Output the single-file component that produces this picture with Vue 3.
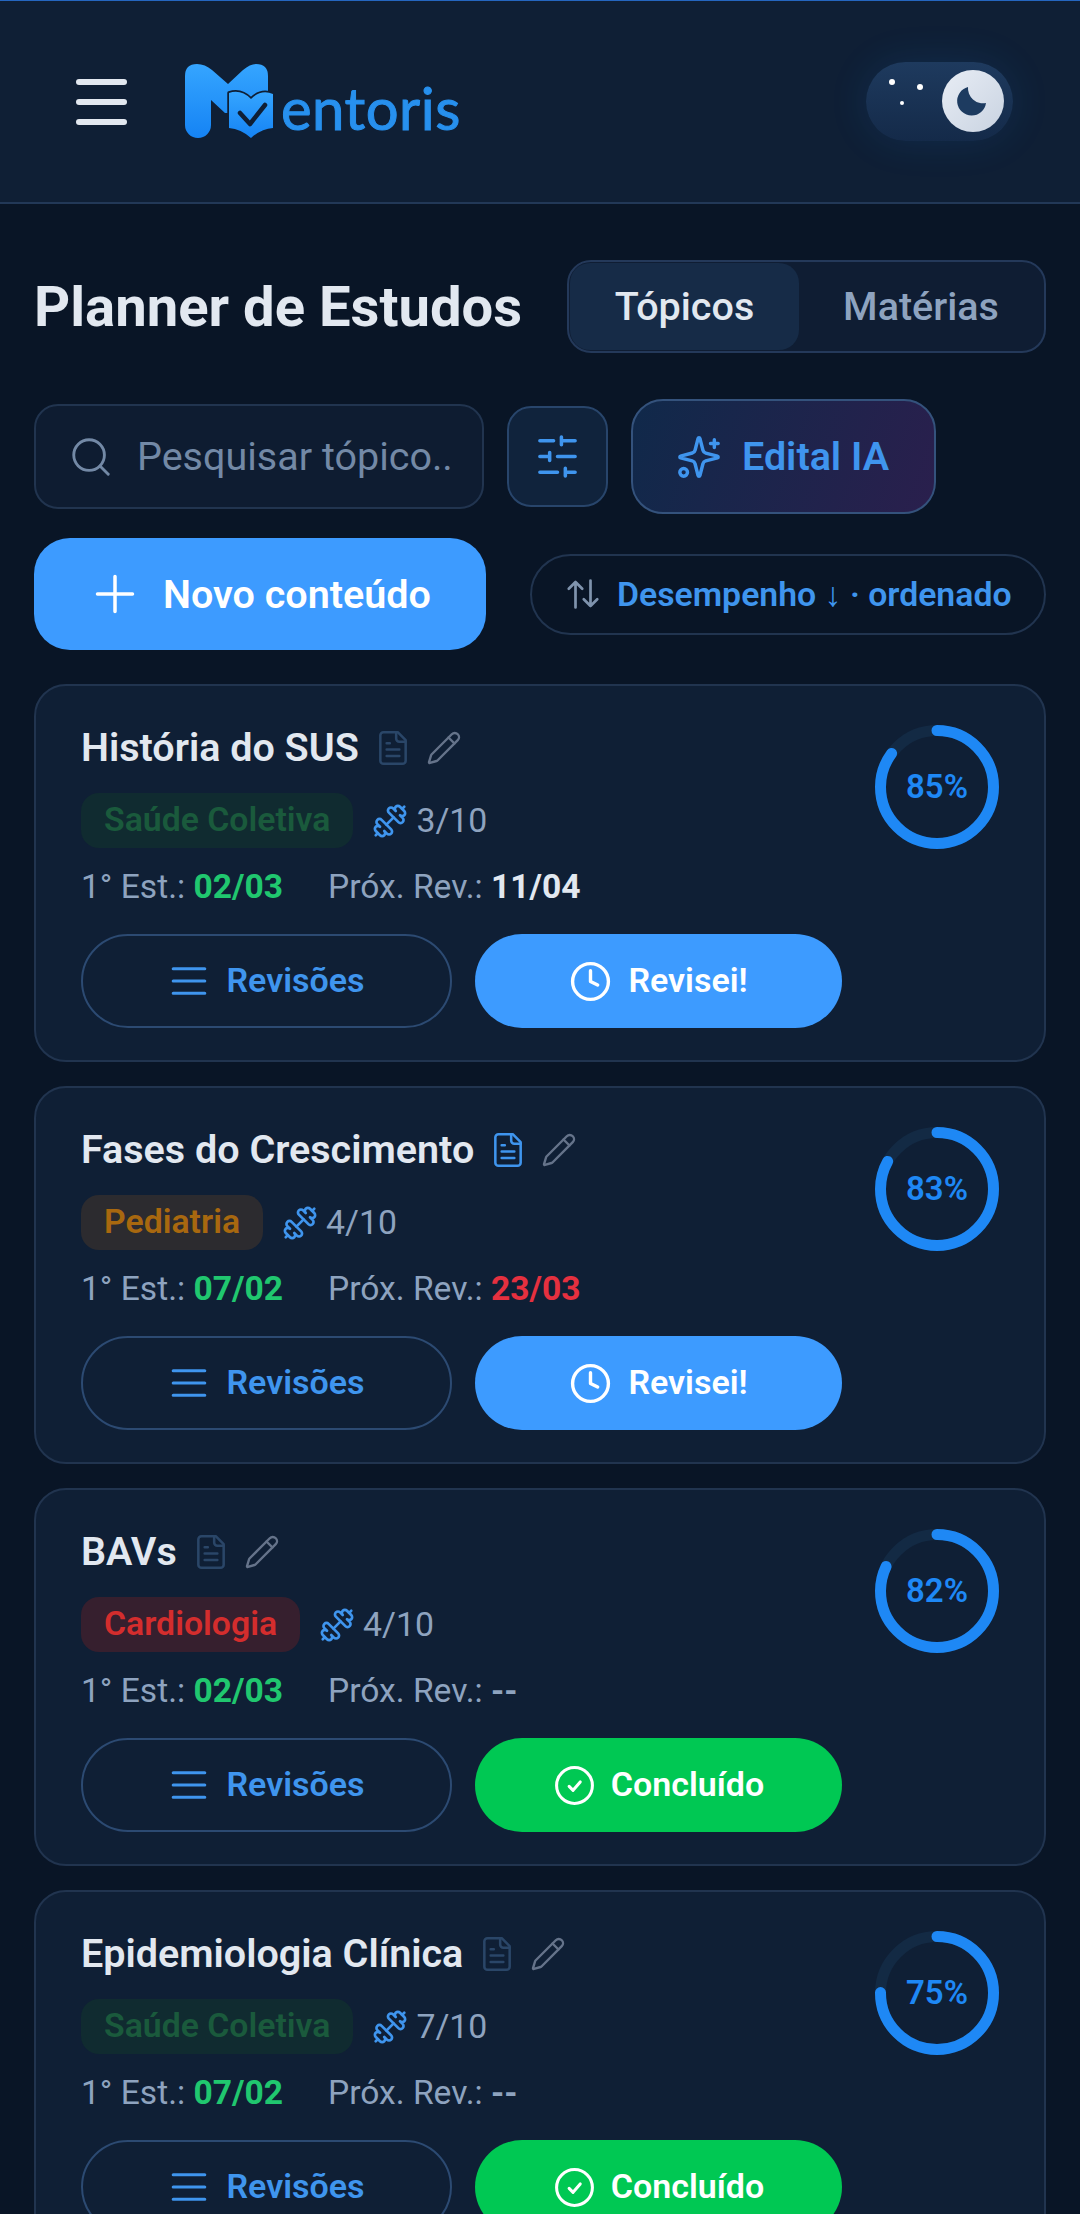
<script setup>
const topics = [
  { id: 1, title: 'História do SUS', note: false, tag: 'Saúde Coletiva', tagClass: 'green', reps: '3/10', first: '02/03', next: '11/04', nextClass: 'white', percent: 85, done: false },
  { id: 2, title: 'Fases do Crescimento', note: true, tag: 'Pediatria', tagClass: 'orange', reps: '4/10', first: '07/02', next: '23/03', nextClass: 'red', percent: 83, done: false },
  { id: 3, title: 'BAVs', note: false, tag: 'Cardiologia', tagClass: 'crimson', reps: '4/10', first: '02/03', next: '--', nextClass: 'muted', percent: 82, done: true },
  { id: 4, title: 'Epidemiologia Clínica', note: false, tag: 'Saúde Coletiva', tagClass: 'green', reps: '7/10', first: '07/02', next: '--', nextClass: 'muted', percent: 75, done: true },
]

const radius = 56.5
const circumference = 2 * Math.PI * radius

function dash(percent) {
  return `${(circumference * percent) / 100} ${circumference}`
}
</script>

<template>
  <div class="page">
    <header class="header">
      <button class="menu" type="button">
        <span></span>
        <span></span>
        <span></span>
      </button>
      <div class="logo">
        <svg class="logo-mark" width="90" height="76" viewBox="0 0 90 76">
          <defs>
            <linearGradient id="logoBlue" x1="0" y1="0" x2="0" y2="1">
              <stop offset="0" stop-color="#35a5ff" />
              <stop offset="1" stop-color="#1583f4" />
            </linearGradient>
          </defs>
          <path d="M0 13Q0 1 12 1Q20 1 27 7L43 21L58 7Q65 1 71 1Q83 1 83 13V50H40L26 37V62A13 13 0 0 1 0 62Z" fill="url(#logoBlue)" />
          <path d="M44 30Q56 26 66 36Q76 26 88 31V65Q76 66 66 75Q56 66 44 65Z" fill="url(#logoBlue)" stroke="#0f1f35" stroke-width="3.5" stroke-linejoin="round" paint-order="stroke" />
          <path d="M55 50L65 61L80 42" fill="none" stroke="#0f1f35" stroke-width="4.5" stroke-linecap="round" stroke-linejoin="round" />
        </svg>
        <span class="logo-text">entoris</span>
      </div>
      <div class="theme-toggle">
        <i class="star s1"></i>
        <i class="star s2"></i>
        <i class="star s3"></i>
        <span class="knob">
          <svg width="62" height="62" viewBox="0 0 62 62">
            <path d="M26 17A14.5 14.5 0 1 0 44 33A15 15 0 0 1 26 17Z" fill="#1d3b60" />
          </svg>
        </span>
      </div>
    </header>

    <main class="content">
      <div class="title-row">
        <h1>Planner de Estudos</h1>
        <div class="segment">
          <span class="seg-item active">Tópicos</span>
          <span class="seg-item">Matérias</span>
        </div>
      </div>

      <div class="search-row">
        <div class="search">
          <svg width="46" height="46" viewBox="0 0 24 24" fill="none" stroke="#7389a6" stroke-width="1.5" stroke-linecap="round">
            <circle cx="11" cy="11" r="8" />
            <path d="m21 21-4.3-4.3" />
          </svg>
          <span>Pesquisar tópico..</span>
        </div>
        <button class="filter" type="button">
          <svg width="47" height="47" viewBox="0 0 24 24" fill="none" stroke="#3f95ee" stroke-width="1.8" stroke-linecap="round">
            <path d="M21 4h-7M10 4H3M21 12h-9M8 12H3M21 20h-5M12 20H3M14 2v4M8 10v4M16 18v4" />
          </svg>
        </button>
        <button class="edital" type="button">
          <svg width="46" height="46" viewBox="0 0 24 24" fill="none" stroke="#3f95ee" stroke-width="1.8" stroke-linecap="round" stroke-linejoin="round">
            <path d="M9.937 15.5A2 2 0 0 0 8.5 14.063l-6.135-1.582a.5.5 0 0 1 0-.962L8.5 9.936A2 2 0 0 0 9.937 8.5l1.582-6.135a.5.5 0 0 1 .963 0L14.063 8.5A2 2 0 0 0 15.5 9.937l6.135 1.581a.5.5 0 0 1 0 .964L15.5 14.063a2 2 0 0 0-1.437 1.437l-1.582 6.135a.5.5 0 0 1-.963 0z" />
            <path d="M20 3v4M22 5h-4" />
            <circle cx="4" cy="20" r="2" />
          </svg>
          <span>Edital IA</span>
        </button>
      </div>

      <div class="action-row">
        <button class="new-btn" type="button">
          <svg width="42" height="42" viewBox="0 0 24 24" fill="none" stroke="#fff" stroke-width="2" stroke-linecap="round">
            <path d="M2 12h20M12 2v20" />
          </svg>
          <span>Novo conteúdo</span>
        </button>
        <button class="sort" type="button">
          <svg width="36" height="36" viewBox="0 0 24 24" fill="none" stroke="#7f93ad" stroke-width="1.8" stroke-linecap="round" stroke-linejoin="round">
            <path d="M7 21V4M2.500 8.500 7 4l4.500 4.500M17 3v17M12.500 15.500 17 20l4.500-4.500" />
          </svg>
          <span>Desempenho ↓ · ordenado</span>
        </button>
      </div>

      <section class="cards">
        <article v-for="item in topics" :key="item.id" class="card">
          <div class="card-main">
            <div class="card-title">
              <h2>{{ item.title }}</h2>
              <svg :class="['doc', { on: item.note }]" width="38" height="38" viewBox="0 0 24 24" fill="none" stroke="currentColor" stroke-width="1.6" stroke-linecap="round" stroke-linejoin="round">
                <path d="M15 2H6a2 2 0 0 0-2 2v16a2 2 0 0 0 2 2h12a2 2 0 0 0 2-2V7Z" />
                <path d="M14 2v4a2 2 0 0 0 2 2h4M10 9H8M16 13H8M16 17H8" />
              </svg>
              <svg class="pencil" width="36" height="36" viewBox="0 0 24 24" fill="none" stroke="currentColor" stroke-width="1.6" stroke-linecap="round" stroke-linejoin="round">
                <path d="M21.174 6.812a1 1 0 0 0-3.986-3.987L3.842 16.174a2 2 0 0 0-.5.83l-1.321 4.352a.5.5 0 0 0 .623.622l4.353-1.32a2 2 0 0 0 .83-.497z" />
                <path d="m15 5 4 4" />
              </svg>
            </div>
            <div class="card-meta">
              <span :class="['tag', item.tagClass]">{{ item.tag }}</span>
              <svg class="dumbbell" width="36" height="36" viewBox="0 0 24 24" fill="none" stroke="#3f95ee" stroke-width="1.8" stroke-linecap="round" stroke-linejoin="round">
                <path d="M14.4 14.4 9.6 9.6" />
                <path d="M18.657 21.485a2 2 0 1 1-2.829-2.828l-1.767 1.768a2 2 0 1 1-2.829-2.829l6.364-6.364a2 2 0 1 1 2.829 2.829l-1.768 1.767a2 2 0 1 1 2.828 2.829z" />
                <path d="m21.500 21.500-1.400-1.400M3.900 3.900 2.500 2.500" />
                <path d="M6.404 12.768a2 2 0 1 1-2.829-2.829l1.768-1.767a2 2 0 1 1-2.828-2.829l2.828-2.828a2 2 0 1 1 2.829 2.828l1.767-1.768a2 2 0 1 1 2.829 2.829z" />
              </svg>
              <span class="reps">{{ item.reps }}</span>
            </div>
            <div class="card-dates">
              <span>1° Est.: <b class="green-date">{{ item.first }}</b></span>
              <span>Próx. Rev.: <b :class="item.nextClass">{{ item.next }}</b></span>
            </div>
            <div class="card-actions">
              <button class="btn outline" type="button">
                <svg width="42" height="42" viewBox="0 0 24 24" fill="none" stroke="currentColor" stroke-width="1.8" stroke-linecap="round">
                  <path d="M3 5h18M3 12h18M3 19h18" />
                </svg>
                <span>Revisões</span>
              </button>
              <button v-if="!item.done" class="btn primary" type="button">
                <svg width="43" height="43" viewBox="0 0 24 24" fill="none" stroke="#fff" stroke-width="1.9" stroke-linecap="round" stroke-linejoin="round">
                  <circle cx="12" cy="12" r="10" />
                  <path d="M12 6v6l4 2" />
                </svg>
                <span>Revisei!</span>
              </button>
              <button v-else class="btn success" type="button">
                <svg width="43" height="43" viewBox="0 0 24 24" fill="none" stroke="#fff" stroke-width="1.7" stroke-linecap="round" stroke-linejoin="round">
                  <circle cx="12" cy="12" r="10" />
                  <path d="m9 12.500 2.200 2.200 4-4.700" />
                </svg>
                <span>Concluído</span>
              </button>
            </div>
          </div>
          <div class="ring">
            <svg width="124" height="124" viewBox="0 0 124 124">
              <circle cx="62" cy="62" :r="radius" fill="none" stroke="#132a44" stroke-width="11" />
              <circle cx="62" cy="62" :r="radius" fill="none" stroke="#1e88f5" stroke-width="11" stroke-linecap="round" :stroke-dasharray="dash(item.percent)" transform="rotate(-90 62 62)" />
            </svg>
            <span>{{ item.percent }}%</span>
          </div>
        </article>
      </section>
    </main>
  </div>
</template>

<style>
html,
body {
  margin: 0;
  background: #091526;
}
</style>

<style scoped>
.page {
  height: 100vh;
  overflow: hidden;
  background: #091526;
  font-family: Roboto, "Liberation Sans", sans-serif;
  color: #e2e8f0;
}
button {
  font-family: inherit;
  cursor: pointer;
  padding: 0;
}
h1,
h2 {
  margin: 0;
}

.header {
  height: 204px;
  box-sizing: border-box;
  display: flex;
  align-items: center;
  background: #0f1f35;
  border-top: 1px solid #2566c0;
  border-bottom: 2px solid #223857;
}
.menu {
  width: 51px;
  margin-left: 76px;
  display: flex;
  flex-direction: column;
  gap: 14px;
  background: none;
  border: none;
}
.menu span {
  height: 6px;
  border-radius: 3px;
  background: #e2e8f0;
}
.logo {
  display: flex;
  align-items: flex-end;
  margin-left: 58px;
  height: 76px;
  margin-top: -1px;
}
.logo-mark {
  flex: none;
}
.logo-text {
  font-family: Lato, sans-serif;
  font-size: 58px;
  line-height: 58px;
  letter-spacing: 0.5px;
  margin-left: 6px;
  margin-bottom: 2px;
  color: #2790ee;
  -webkit-text-stroke: 1px #2790ee;
}
.theme-toggle {
  position: relative;
  width: 147px;
  height: 79px;
  margin-left: auto;
  margin-right: 67px;
  border-radius: 40px;
  background: linear-gradient(180deg, #1e3a5e, #142a49);
  box-shadow: 0 0 40px rgba(30, 136, 245, 0.12);
}
.star {
  position: absolute;
  border-radius: 50%;
  background: #fff;
}
.s1 {
  left: 23px;
  top: 17px;
  width: 6px;
  height: 6px;
}
.s2 {
  left: 51px;
  top: 22px;
  width: 6px;
  height: 6px;
}
.s3 {
  left: 34px;
  top: 39px;
  width: 4px;
  height: 4px;
}
.knob {
  position: absolute;
  left: 76px;
  top: 8px;
  width: 62px;
  height: 62px;
  border-radius: 50%;
  background: linear-gradient(135deg, #e8edf5, #c9d3e1);
}
.knob svg {
  display: block;
}

.content {
  padding: 56px 34px 0;
}
.title-row {
  display: flex;
  align-items: center;
  justify-content: space-between;
}
h1 {
  font-size: 56.2px;
  font-weight: 700;
  line-height: 60px;
  color: #e2e8f0;
  white-space: nowrap;
}
.segment {
  display: flex;
  width: 479px;
  height: 93px;
  box-sizing: border-box;
  padding: 1px;
  background: #0f1d33;
  border: 2px solid #24395a;
  border-radius: 24px;
}
.seg-item {
  flex: 1;
  display: flex;
  align-items: center;
  justify-content: center;
  font-size: 39.5px;
  font-weight: 500;
  color: #8ea3bf;
  border-radius: 20px;
}
.seg-item.active {
  flex: none;
  width: 229px;
  background: #162b47;
  color: #e2e8f0;
}

.search-row {
  display: flex;
  align-items: center;
  margin-top: 46px;
}
.search {
  width: 450px;
  height: 105px;
  box-sizing: border-box;
  display: flex;
  align-items: center;
  gap: 23px;
  padding-left: 32px;
  background: #0e1c31;
  border: 2px solid #21344f;
  border-radius: 24px;
  font-size: 39.5px;
  color: #7389a6;
  white-space: nowrap;
}
.filter {
  width: 101px;
  height: 101px;
  margin-left: 23px;
  display: flex;
  align-items: center;
  justify-content: center;
  background: #10233c;
  border: 2px solid #28456b;
  border-radius: 24px;
}
.edital {
  width: 305px;
  height: 115px;
  margin-left: 23px;
  display: flex;
  align-items: center;
  justify-content: center;
  gap: 20px;
  padding-right: 2px;
  background: linear-gradient(110deg, #10294a, #2a1f4d);
  border: 2px solid #34527c;
  border-radius: 32px;
  color: #3f95ee;
  font-size: 39.5px;
  font-weight: 600;
}

.action-row {
  display: flex;
  align-items: center;
  justify-content: space-between;
  margin-top: 24px;
}
.new-btn {
  width: 452px;
  height: 112px;
  display: flex;
  align-items: center;
  justify-content: center;
  gap: 27px;
  padding-left: 5px;
  background: #3d9bff;
  border: none;
  border-radius: 36px;
  color: #fff;
  font-size: 39.5px;
  font-weight: 600;
}
.sort {
  width: 516px;
  height: 81px;
  display: flex;
  align-items: center;
  gap: 16px;
  padding-left: 33px;
  box-sizing: border-box;
  background: transparent;
  border: 2px solid #21344f;
  border-radius: 41px;
  color: #3f95ee;
  font-size: 33.8px;
  font-weight: 600;
  white-space: nowrap;
}

.cards {
  display: flex;
  flex-direction: column;
  gap: 24px;
  margin-top: 34px;
}
.card {
  flex: none;
  height: 378px;
  box-sizing: border-box;
  display: flex;
  justify-content: space-between;
  padding: 37px 45px 0;
  background: #0f1f35;
  border: 2px solid #21344f;
  border-radius: 32px;
}
.card-title {
  display: flex;
  align-items: center;
  height: 49px;
}
h2 {
  font-size: 39.5px;
  font-weight: 600;
  color: #e2e8f0;
  white-space: nowrap;
}
.doc {
  margin-left: 15px;
  color: #2a4668;
}
.doc.on {
  color: #3f95ee;
}
.pencil {
  margin-left: 14px;
  color: #65738a;
}
.card-meta {
  display: flex;
  align-items: center;
  margin-top: 21px;
  height: 55px;
}
.tag {
  height: 55px;
  box-sizing: border-box;
  display: flex;
  align-items: center;
  padding: 0 23px 2px;
  border-radius: 18px;
  font-size: 33.8px;
  font-weight: 600;
  white-space: nowrap;
}
.tag.green {
  background: #102b30;
  color: #1a5a3c;
}
.tag.orange {
  background: #2c2b2f;
  color: #a8680f;
}
.tag.crimson {
  background: #361f2e;
  color: #d42d2d;
}
.dumbbell {
  margin-left: 19px;
  transform: scaleX(-1);
}
.reps {
  margin-left: 8px;
  font-size: 33.8px;
  color: #8ea3bf;
}
.card-dates {
  display: flex;
  gap: 45px;
  margin-top: 17px;
  font-size: 33.6px;
  line-height: 44px;
  color: #8ea3bf;
  white-space: nowrap;
}
.card-dates b {
  font-weight: 700;
}
.green-date {
  color: #20c76f;
}
.white {
  color: #e2e8f0;
}
.red {
  color: #e5303f;
}
.muted {
  color: #8ea3bf;
}
.card-actions {
  display: flex;
  gap: 23px;
  margin-top: 25px;
}
.btn {
  height: 94px;
  display: flex;
  align-items: center;
  justify-content: center;
  border-radius: 47px;
  padding-bottom: 3px;
  font-size: 34px;
  font-weight: 600;
  box-sizing: border-box;
}
.btn svg {
  margin-top: 3px;
}
.outline {
  width: 371px;
  gap: 16px;
  background: transparent;
  border: 2px solid #2c4a72;
  color: #3f95ee;
}
.primary {
  width: 367px;
  gap: 16px;
  background: #3d9bff;
  border: none;
  color: #fff;
}
.success {
  width: 367px;
  gap: 15px;
  background: #00c853;
  border: none;
  color: #fff;
}
.ring {
  position: relative;
  flex: none;
  width: 124px;
  height: 124px;
  margin-top: 2px;
}
.ring svg {
  display: block;
}
.ring span {
  position: absolute;
  inset: 0 0 2px;
  display: flex;
  align-items: center;
  justify-content: center;
  font-size: 33px;
  font-weight: 600;
  color: #1e88f5;
}
</style>
